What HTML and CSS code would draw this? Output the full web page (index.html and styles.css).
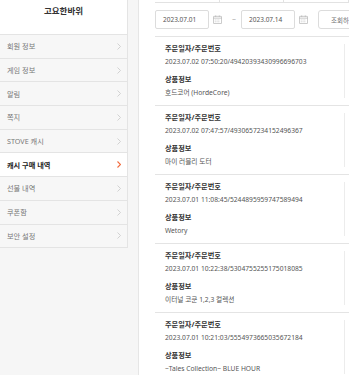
FILE: index.html
```html
<!DOCTYPE html>
<html lang="ko">
<head>
    <meta charset="UTF-8">
    <meta name="viewport" content="width=device-width, initial-scale=1.0">
    <title>캐시 구매 내역</title>
    <link rel="stylesheet" href="styles.css">
</head>
<body>
    <div class="page">
        <div class="sidebar">
            <div class="profile">고요한바위</div>
            <ul class="menu">
                <li class="menu-item">회원 정보<svg class="chev" viewBox="0 0 4 7"><polyline points="0.5,0.5 3.5,3.5 0.5,6.5"/></svg></li>
                <li class="menu-item">게임 정보<svg class="chev" viewBox="0 0 4 7"><polyline points="0.5,0.5 3.5,3.5 0.5,6.5"/></svg></li>
                <li class="menu-item">알림<svg class="chev" viewBox="0 0 4 7"><polyline points="0.5,0.5 3.5,3.5 0.5,6.5"/></svg></li>
                <li class="menu-item">쪽지<svg class="chev" viewBox="0 0 4 7"><polyline points="0.5,0.5 3.5,3.5 0.5,6.5"/></svg></li>
                <li class="menu-item">STOVE 캐시<svg class="chev" viewBox="0 0 4 7"><polyline points="0.5,0.5 3.5,3.5 0.5,6.5"/></svg></li>
                <li class="menu-item active">캐시 구매 내역<svg class="chev" viewBox="0 0 4 7"><polyline points="0.5,0.5 3.5,3.5 0.5,6.5"/></svg></li>
                <li class="menu-item">선물 내역<svg class="chev" viewBox="0 0 4 7"><polyline points="0.5,0.5 3.5,3.5 0.5,6.5"/></svg></li>
                <li class="menu-item">쿠폰함<svg class="chev" viewBox="0 0 4 7"><polyline points="0.5,0.5 3.5,3.5 0.5,6.5"/></svg></li>
                <li class="menu-item">보안 설정<svg class="chev" viewBox="0 0 4 7"><polyline points="0.5,0.5 3.5,3.5 0.5,6.5"/></svg></li>
            </ul>
        </div>

        <div class="main">
            <div class="tabs">
                <span class="tab"></span>
                <span class="tab"></span>
                <span class="tab"></span>
            </div>

            <div class="search">
                <div class="date-input">2023.07.01</div>
                <svg class="cal" viewBox="0 0 10 10"><rect x="0.5" y="1.5" width="9" height="8" rx="0.5"/><line x1="0.5" y1="3.5" x2="9.5" y2="3.5"/><line x1="3" y1="0.5" x2="3" y2="2"/><line x1="7" y1="0.5" x2="7" y2="2"/><line x1="2" y1="5.5" x2="8" y2="5.5" class="dots"/><line x1="2" y1="7.5" x2="8" y2="7.5" class="dots"/></svg>
                <span class="tilde">~</span>
                <div class="date-input">2023.07.14</div>
                <svg class="cal" viewBox="0 0 10 10"><rect x="0.5" y="1.5" width="9" height="8" rx="0.5"/><line x1="0.5" y1="3.5" x2="9.5" y2="3.5"/><line x1="3" y1="0.5" x2="3" y2="2"/><line x1="7" y1="0.5" x2="7" y2="2"/><line x1="2" y1="5.5" x2="8" y2="5.5" class="dots"/><line x1="2" y1="7.5" x2="8" y2="7.5" class="dots"/></svg>
                <button class="btn-search">조회하기</button>
            </div>

            <div class="orders">
                <div class="order">
                    <div class="info">
                        <div class="label">주문일자/주문번호</div>
                        <div class="value">2023.07.02 07:50:20/49420393430996696703</div>
                        <div class="label second">상품정보</div>
                        <div class="value">호드코어 (HordeCore)</div>
                    </div>
                    <div class="side"></div>
                </div>
                <div class="order">
                    <div class="info">
                        <div class="label">주문일자/주문번호</div>
                        <div class="value">2023.07.02 07:47:57/4930657234152496367</div>
                        <div class="label second">상품정보</div>
                        <div class="value">마이 러블리 도터</div>
                    </div>
                    <div class="side"></div>
                </div>
                <div class="order">
                    <div class="info">
                        <div class="label">주문일자/주문번호</div>
                        <div class="value">2023.07.01 11:08:45/5244895959747589494</div>
                        <div class="label second">상품정보</div>
                        <div class="value">Wetory</div>
                    </div>
                    <div class="side"></div>
                </div>
                <div class="order">
                    <div class="info">
                        <div class="label">주문일자/주문번호</div>
                        <div class="value">2023.07.01 10:22:38/5304755255175018085</div>
                        <div class="label second">상품정보</div>
                        <div class="value">이터널 코쿤 1,2,3 컬렉션</div>
                    </div>
                    <div class="side"></div>
                </div>
                <div class="order">
                    <div class="info">
                        <div class="label">주문일자/주문번호</div>
                        <div class="value">2023.07.01 10:21:03/5554973665035672184</div>
                        <div class="label second">상품정보</div>
                        <div class="value">~Tales Collection~ BLUE HOUR</div>
                    </div>
                    <div class="side"></div>
                </div>
            </div>
        </div>
    </div>
</body>
</html>
```

FILE: styles.css
```css
html, body {
    margin: 0;
    height: 100%;
    overflow: hidden;
}
body {
    font-family: "Noto Sans", "Noto Sans CJK KR", sans-serif;
    background-color: #f6f6f6;
    color: #333;
}
.page {
    display: flex;
    height: 100%;
}
.sidebar {
    width: 128px;
    flex: none;
}
.profile {
    height: 35px;
    box-sizing: border-box;
    background-color: white;
    border-right: 1px solid #e4e4e4;
    border-bottom: 1px solid #e4e4e4;
    text-align: center;
    font-size: 8.5px;
    font-weight: bold;
    line-height: 13px;
    padding-top: 4px;
    color: #333;
}
.menu {
    list-style: none;
    margin: 0;
    padding: 0;
}
.menu-item {
    height: 23.7px;
    box-sizing: border-box;
    display: flex;
    align-items: center;
    justify-content: space-between;
    padding: 0 6px 0 7px;
    font-size: 7.2px;
    color: #777;
    background-color: #f7f7f7;
    border-right: 1px solid #e4e4e4;
    border-bottom: 1px solid #e4e4e4;
}
.menu-item.active {
    background-color: white;
    color: #222;
    font-weight: bold;
}
.chev {
    width: 4px;
    height: 7px;
    fill: none;
    stroke: #c8c8c8;
    stroke-width: 0.8;
}
.menu-item.active .chev {
    stroke: #f26a3c;
    stroke-width: 1.1;
}
.main {
    flex: 1;
    margin-left: 10px;
    background-color: white;
    border-left: 1px solid #e6e6e6;
    padding-left: 16px;
    overflow: hidden;
    min-width: 0;
}
.tabs {
    display: flex;
    height: 2px;
    border-bottom: 1px solid #e2e2e2;
}
.tab {
    width: 74px;
    border-right: 1px solid #e2e2e2;
}
.search {
    display: flex;
    align-items: center;
    margin-top: 7px;
    height: 19px;
    width: 240px;
}
.date-input {
    width: 54px;
    height: 19px;
    box-sizing: border-box;
    border: 1px solid #dcdcdc;
    border-radius: 2px;
    font-size: 6.5px;
    line-height: 17px;
    padding-left: 7px;
    color: #555;
    flex: none;
}
.cal {
    width: 9px;
    height: 9px;
    margin-left: 4px;
    fill: none;
    stroke: #aaa;
    stroke-width: 0.7;
    flex: none;
}
.cal .dots {
    stroke-dasharray: 1 1;
}
.tilde {
    font-size: 7px;
    color: #999;
    margin: 0 5px 0 10px;
}
.btn-search {
    flex: none;
    margin-left: 10px;
    width: 60px;
    height: 19px;
    border: 1px solid #dcdcdc;
    border-radius: 3px;
    background-color: white;
    font-family: inherit;
    font-size: 6.5px;
    color: #777;
    padding: 0;
    text-align: left;
    padding-left: 12px;
}
.orders {
    margin-top: 7px;
    border-top: 1px solid #e4e4e4;
    width: 260px;
}
.order {
    display: flex;
    border-bottom: 1px solid #e4e4e4;
}
.info {
    width: 189px;
    flex: none;
    box-sizing: border-box;
    padding: 5px 0 6px 10px;
    line-height: 13px;
    white-space: nowrap;
}
.label {
    font-size: 7.2px;
    font-weight: bold;
    color: #333;
}
.label.second {
    margin-top: 5px;
}
.value {
    font-size: 6.7px;
    color: #555;
}
.side {
    flex: 1;
    margin: 7px 0;
    border-left: 1px solid #ececec;
}
```
